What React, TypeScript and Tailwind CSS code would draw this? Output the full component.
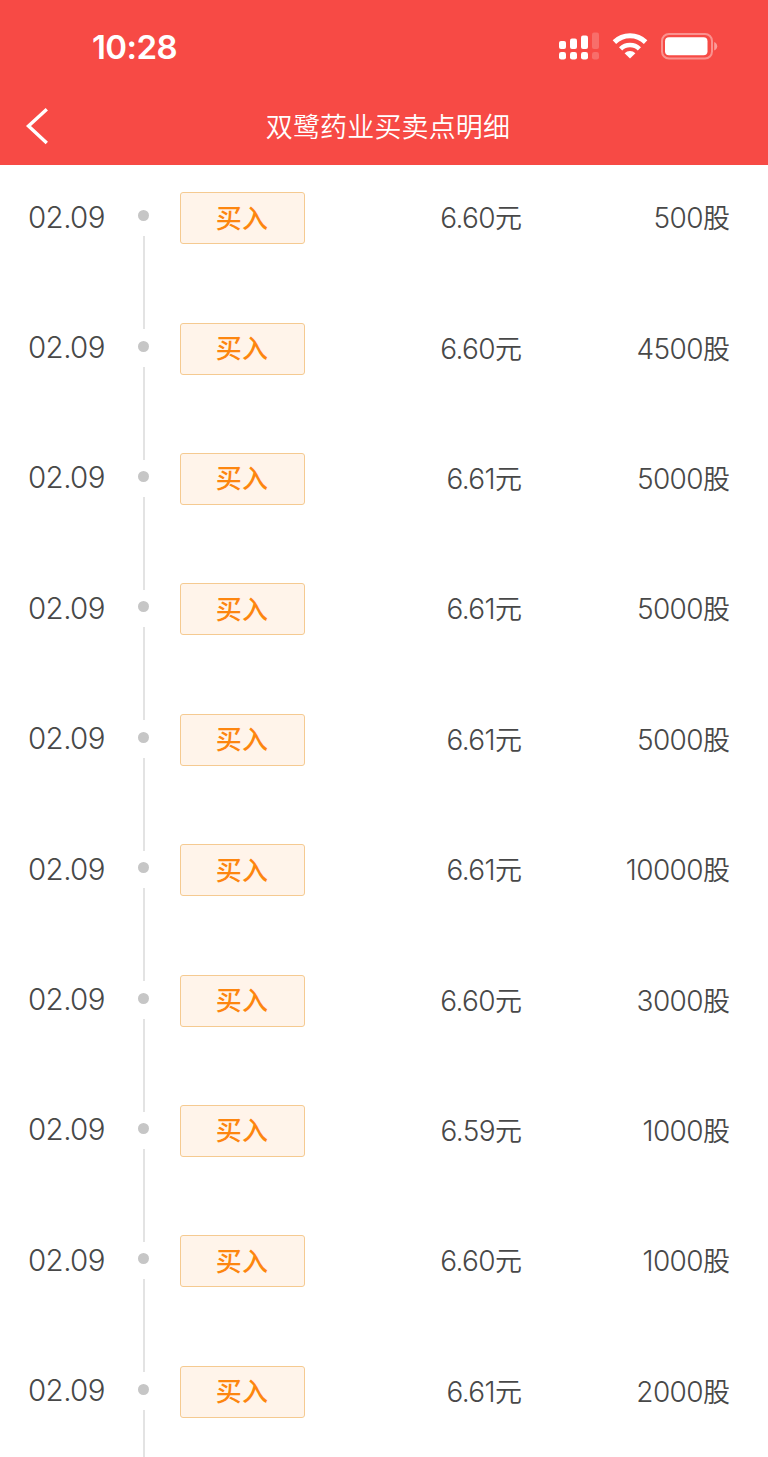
type Trade = { date: string; side: string; price: string; amount: number };

const TRADES: Trade[] = [
  { date: '02.09', side: '买入', price: '6.60', amount: 500 },
  { date: '02.09', side: '买入', price: '6.60', amount: 4500 },
  { date: '02.09', side: '买入', price: '6.61', amount: 5000 },
  { date: '02.09', side: '买入', price: '6.61', amount: 5000 },
  { date: '02.09', side: '买入', price: '6.61', amount: 5000 },
  { date: '02.09', side: '买入', price: '6.61', amount: 10000 },
  { date: '02.09', side: '买入', price: '6.60', amount: 3000 },
  { date: '02.09', side: '买入', price: '6.59', amount: 1000 },
  { date: '02.09', side: '买入', price: '6.60', amount: 1000 },
  { date: '02.09', side: '买入', price: '6.61', amount: 2000 },
];

const cjk = "font-['Noto_Sans_CJK_SC',sans-serif]";

function SignalIcon() {
  return (
    <svg width="40" height="28" viewBox="0 0 40 28" fill="#fff">
      <rect x="0" y="9" width="7" height="8" rx="2" />
      <rect x="11" y="6.5" width="7" height="10.5" rx="2" />
      <rect x="22" y="3.5" width="7" height="13.5" rx="2" />
      <rect x="33" y="0.5" width="7" height="16.5" rx="2" opacity="0.2" />
      <rect x="0" y="20" width="7" height="7.5" rx="2.3" />
      <rect x="11" y="20" width="7" height="7.5" rx="2.3" />
      <rect x="22" y="20" width="7" height="7.5" rx="2.3" />
      <rect x="33" y="20" width="7" height="7.5" rx="2.3" opacity="0.2" />
    </svg>
  );
}

function WifiIcon() {
  return (
    <svg width="36" height="26" viewBox="0 0 36 26" fill="none" stroke="#fff" strokeWidth="5">
      <path d="M2.4 9.1a22.5 22.5 0 0 1 31.2 0" />
      <path d="M8.6 15.8a13.6 13.6 0 0 1 18.8 0" strokeWidth="4.6" />
      <path d="M18 25.4l-5.4-5.2a7.6 7.6 0 0 1 10.8 0z" fill="#fff" stroke="none" />
    </svg>
  );
}

function BatteryIcon() {
  return (
    <svg width="57" height="27" viewBox="0 0 57 27">
      <rect x="1" y="1" width="50" height="24.5" rx="7" fill="none" stroke="#fff" strokeOpacity="0.4" strokeWidth="2" />
      <rect x="4" y="4.2" width="42.5" height="18" rx="4" fill="#fff" />
      <path d="M53.2 9c4 1.6 4 6.9 0 8.5z" fill="#fff" fillOpacity="0.45" />
    </svg>
  );
}

function Header() {
  return (
    <header className="h-[165px] bg-[#f74a45] text-white">
      <div className="flex h-[87px] items-center justify-between pt-[5px] pr-[50px] pl-[92px]">
        <span className="pt-px font-['Inter',sans-serif] text-[33px] leading-10 font-semibold tracking-[-0.6px]">10:28</span>
        <div className="flex items-center gap-[13px]">
          <SignalIcon />
          <WifiIcon />
          <BatteryIcon />
        </div>
      </div>
      <div className="grid h-[78px] grid-cols-[60px_1fr_52px] items-center">
        <svg className="ml-[25px]" width="24" height="38" viewBox="0 0 24 38" fill="none" stroke="#fff" strokeWidth="3.4">
          <path d="M21.8 2.2L3.5 19l18.3 17" />
        </svg>
        <h1 className={`${cjk} text-center text-[27px] leading-10 font-[350] tracking-[0.15px]`}>双鹭药业买卖点明细</h1>
      </div>
    </header>
  );
}

function Quantity({ value, unit, className }: { value: string; unit: string; className: string }) {
  return (
    <div className={`flex items-baseline justify-end pt-[5px] leading-10 ${className}`}>
      <span className="font-['Inter',sans-serif] text-[28px] font-[340] tracking-[-0.6px]">{value}</span>
      <span className={`${cjk} text-[27px] font-[350]`}>{unit}</span>
    </div>
  );
}

function TradeRow({ trade }: { trade: Trade }) {
  return (
    <li className="flex h-[130.4px] shrink-0 items-start text-[#484848]">
      <time className="w-[135px] pt-[4.5px] pl-[28px] font-['Inter',sans-serif] text-[29.5px] leading-10 font-[340] tracking-[-0.6px]">
        {trade.date}
      </time>
      <div className="flex w-[17px] flex-col items-center pt-[18px]">
        <span className="size-[11px] rounded-full bg-[#c6c6c6]" />
        <span className="mt-[15px] h-[93px] w-[2px] bg-[#e3e3e3]" />
      </div>
      <span className={`${cjk} ml-[28px] flex h-[52px] w-[125px] items-center justify-center rounded-[3px] border border-[#f5ca91] bg-[#fff4ea] pr-px pb-[4px] text-[26px] font-medium tracking-[0.3px] text-[#fd860f]`}>
        {trade.side}
      </span>
      <Quantity className="w-[217px]" value={trade.price} unit="元" />
      <Quantity className="w-[208px]" value={String(trade.amount)} unit="股" />
    </li>
  );
}

export default function App() {
  return (
    <main className="flex h-[1457px] w-[768px] flex-col overflow-hidden bg-white">
      <Header />
      <ul className="flex flex-col pt-[27.2px]">
        {TRADES.map((trade, i) => (
          <TradeRow key={i} trade={trade} />
        ))}
      </ul>
    </main>
  );
}
